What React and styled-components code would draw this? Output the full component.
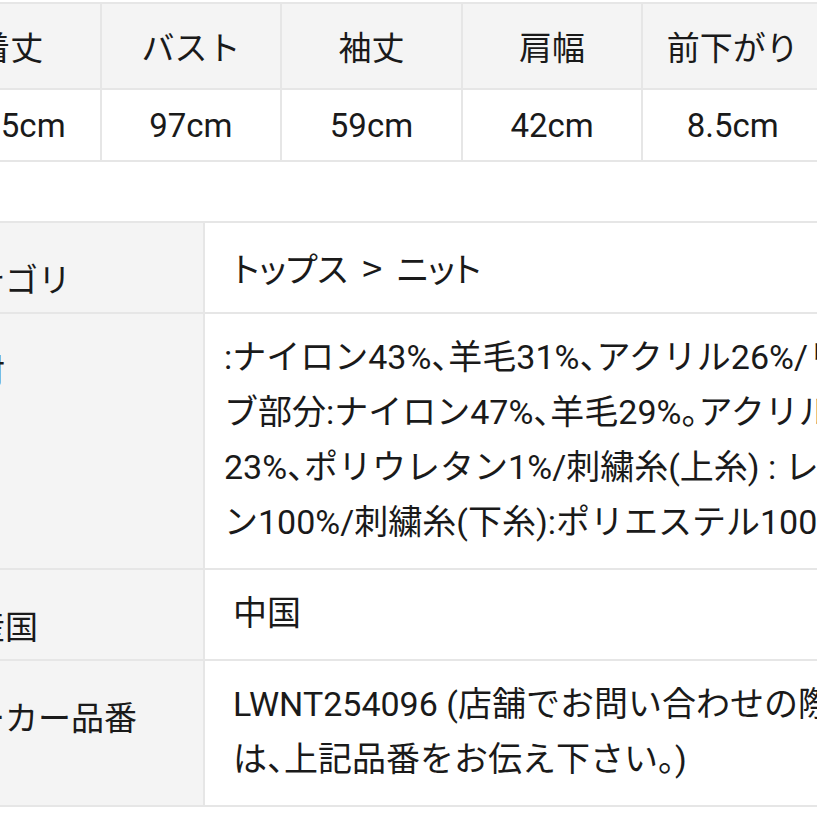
import React from 'react';
import styled, { createGlobalStyle } from 'styled-components';

const GlobalStyle = createGlobalStyle`
  html, body {
    margin: 0;
    padding: 0;
    background: #fff;
    overflow: hidden;
  }

  body {
    font-family: 'Roboto', 'Noto Sans CJK JP', sans-serif;
    font-feature-settings: 'halt';
    color: #1a1a1a;
  }
`;

const Page = styled.div`
  width: 817px;
  height: 817px;
  overflow: hidden;
  padding-top: 2px;
  box-sizing: border-box;
`;

const SizeTable = styled.table`
  table-layout: fixed;
  border-collapse: collapse;
  width: 905px;
  margin-left: -81px;
  font-size: 33px;
`;

const HeadCell = styled.th`
  height: 84px;
  padding: 0;
  font-weight: 400;
  background: #f4f4f4;
  border: 2px solid #e6e6e6;
  text-align: center;
`;

const SizeCell = styled.td`
  height: 70px;
  padding: 0;
  border: 2px solid #e6e6e6;
  text-align: center;
`;

const SpecTable = styled.table`
  table-layout: fixed;
  border-collapse: collapse;
  width: 1000px;
  margin: 59px 0 0 -80px;
  font-size: 34px;
`;

const Label = styled.th`
  width: 283px;
  box-sizing: border-box;
  padding: 30px 0 0 17px;
  vertical-align: top;
  text-align: left;
  font-weight: 400;
  font-size: 33px;
  line-height: 55px;
  white-space: nowrap;
  background: #f4f4f4;
  border: 2px solid #e6e6e6;
`;

const Value = styled.td`
  padding: 16px 0 18px 28px;
  vertical-align: top;
  line-height: 55px;
  border: 2px solid #e6e6e6;
`;

const Line = styled.span`
  display: block;
  height: 55px;
  white-space: nowrap;
  margin-left: ${(p) => p.$shift || 0}px;
  font-feature-settings: ${(p) => (p.$palt ? "'palt'" : "'halt'")};
`;

const Arrow = styled.span`
  font-family: 'Noto Sans CJK JP', sans-serif;
  font-size: 36px;
  margin: 0 6px;
`;

const NextRow = styled.div`
  margin-top: 10px;
  margin-left: -80px;
  border-top: 2px solid #e6e6e6;
`;

const sizes = [
  ['着丈', '62.5cm'],
  ['バスト', '97cm'],
  ['袖丈', '59cm'],
  ['肩幅', '42cm'],
  ['前下がり', '8.5cm'],
];

const specs = [
  {
    label: 'カテゴリ',
    palt: true,
    lines: [
      <>
        トップス{' '}
        <Arrow>&gt;</Arrow> ニット
      </>,
    ],
  },
  {
    label: '素材',
    shift: -9,
    lines: [
      ':ナイロン43%、羊毛31%、アクリル26%/リ',
      'ブ部分:ナイロン47%、羊毛29%。アクリル',
      '23%、ポリウレタン1%/刺繍糸(上糸) : レー',
      'ン100%/刺繍糸(下糸):ポリエステル100%',
    ],
  },
  { label: '原産国', lines: ['中国'] },
  {
    label: 'メーカー品番',
    lines: ['LWNT254096 (店舗でお問い合わせの際', 'は、上記品番をお伝え下さい。)'],
  },
];

export default function App() {
  return (
    <Page>
      <GlobalStyle />
      <SizeTable>
        <thead>
          <tr>
            {sizes.map(([name]) => (
              <HeadCell key={name}>{name}</HeadCell>
            ))}
          </tr>
        </thead>
        <tbody>
          <tr>
            {sizes.map(([name, value]) => (
              <SizeCell key={name}>{value}</SizeCell>
            ))}
          </tr>
        </tbody>
      </SizeTable>

      <SpecTable>
        <tbody>
          {specs.map((row) => (
            <tr key={row.label}>
              <Label>{row.label}</Label>
              <Value>
                {row.lines.map((text, i) => (
                  <Line key={i} $shift={row.shift} $palt={row.palt}>
                    {text}
                  </Line>
                ))}
              </Value>
            </tr>
          ))}
        </tbody>
      </SpecTable>
      <NextRow />
    </Page>
  );
}
